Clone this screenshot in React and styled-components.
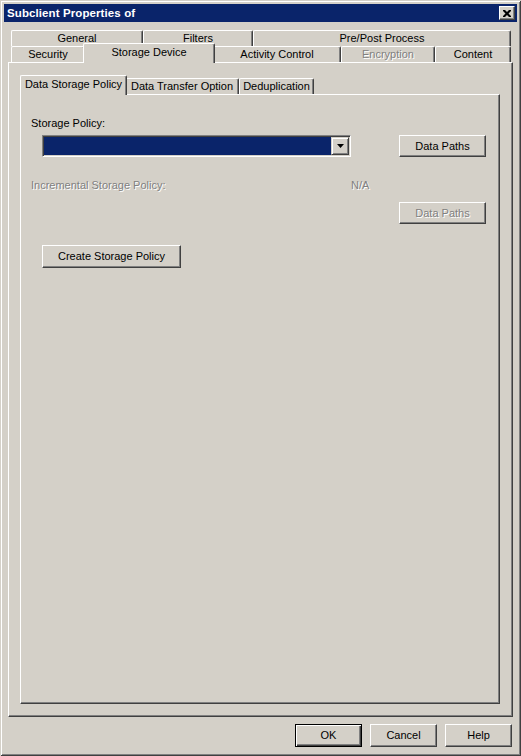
import React from "react";
import styled, { createGlobalStyle, css } from "styled-components";

const GlobalStyle = createGlobalStyle`
  html, body { margin: 0; padding: 0; background: #d4d0c8; }
  body {
    font-family: "Liberation Sans", Arial, sans-serif;
    font-size: 11px;
    color: #000;
  }
`;

const Window = styled.div`
  box-sizing: border-box;
  width: 521px;
  height: 756px;
  padding: 4px;
  background: #d4d0c8;
  display: flex;
  flex-direction: column;
  box-shadow: inset 1px 1px #d4d0c8, inset -1px -1px #404040,
    inset 2px 2px #fff, inset -2px -2px #808080;
`;

const TitleBar = styled.div`
  flex: none;
  height: 18px;
  background: #0a246a;
  display: flex;
  align-items: center;
  padding: 0 2px 0 3px;
  color: #fff;
  font-weight: bold;
  font-size: 11.5px;
  letter-spacing: 0.1px;
`;

const TitleText = styled.span`
  flex: 1;
  white-space: nowrap;
`;

const CloseButton = styled.div`
  box-sizing: border-box;
  width: 16px;
  height: 14px;
  background: #d4d0c8;
  border: 1px solid;
  border-color: #fff #404040 #404040 #fff;
  box-shadow: inset -1px -1px #808080;
  display: flex;
  align-items: center;
  justify-content: center;
`;

const TabArea = styled.div`
  flex: 1;
  display: flex;
  flex-direction: column;
  margin: 8px 4px 0;
  min-height: 0;
`;

const TabRow = styled.div`
  flex: none;
  display: flex;
  align-items: flex-start;
  height: 16px;
  padding: 0 ${(p) => p.$right || 0}px 0 ${(p) => p.$left || 0}px;
`;

const Tab = styled.div`
  box-sizing: border-box;
  flex: none;
  width: ${(p) => p.$w}px;
  height: 16px;
  border-top: 1px solid #fff;
  border-left: 1px solid #fff;
  border-right: 1px solid #404040;
  border-radius: 2px 2px 0 0;
  box-shadow: inset -1px 0 #808080;
  background: #d4d0c8;
  text-align: center;
  line-height: 14px;
  white-space: nowrap;
  overflow: hidden;
  color: ${(p) => (p.$disabled ? "#808080" : "#000")};
  text-shadow: ${(p) => (p.$disabled ? "1px 1px 0 #fff" : "none")};
  ${(p) =>
    p.$active &&
    css`
      width: ${p.$w + 4}px;
      height: 20px;
      margin: -3px -2px -1px;
      padding-top: 1px;
      position: relative;
      z-index: 1;
    `}
`;

const Panel = styled.div`
  box-sizing: border-box;
  flex: 1;
  display: flex;
  flex-direction: column;
  min-height: 0;
  border: 1px solid;
  border-color: #fff #404040 #404040 #fff;
  box-shadow: inset -1px -1px #808080;
  padding: ${(p) => p.$pad};
`;

const Row = styled.div`
  display: flex;
  align-items: flex-start;
  margin-top: ${(p) => p.$mt || 0}px;
  padding-left: ${(p) => p.$indent || 0}px;
`;

const Label = styled.div`
  line-height: 14px;
  white-space: nowrap;
  width: ${(p) => (p.$w ? `${p.$w}px` : "auto")};
  flex: none;
  color: ${(p) => (p.$disabled ? "#808080" : "#000")};
  text-shadow: ${(p) => (p.$disabled ? "1px 1px 0 #fff" : "none")};
`;

const Combo = styled.div`
  box-sizing: border-box;
  flex: none;
  width: 309px;
  height: 22px;
  padding: 1px;
  display: flex;
  border: 1px solid;
  border-color: #808080 #fff #fff #808080;
  box-shadow: inset 1px 1px #404040, inset -1px -1px #d4d0c8;
  background: #fff;
`;

const ComboValue = styled.div`
  flex: 1;
  background: #0a246a;
`;

const DropButton = styled.div`
  box-sizing: border-box;
  flex: none;
  width: 18px;
  background: #d4d0c8;
  border: 1px solid;
  border-color: #d4d0c8 #404040 #404040 #d4d0c8;
  box-shadow: inset 1px 1px #fff, inset -1px -1px #808080;
  display: flex;
  align-items: center;
  justify-content: center;
`;

const Button = styled.button`
  box-sizing: border-box;
  flex: none;
  width: ${(p) => p.$w}px;
  height: ${(p) => p.$h || 22}px;
  margin-left: ${(p) => (p.$push ? "auto" : "0")};
  padding: 0 0 1px;
  font: 11px "Liberation Sans", Arial, sans-serif;
  background: #d4d0c8;
  color: ${(p) => (p.disabled ? "#808080" : "#000")};
  text-shadow: ${(p) => (p.disabled ? "1px 1px 0 #fff" : "none")};
  border: 1px solid;
  border-color: #fff #404040 #404040 #fff;
  box-shadow: inset -1px -1px #808080;
  ${(p) =>
    p.$default &&
    css`
      border-color: #000;
      box-shadow: inset 1px 1px #fff, inset -1px -1px #404040,
        inset -2px -2px #808080;
    `}
`;

const Footer = styled.div`
  flex: none;
  display: flex;
  justify-content: flex-end;
  gap: 8px;
  padding: 7px 5px 5px 0;
`;

const backTabs = [
  { label: "General", w: 132 },
  { label: "Filters", w: 110 },
  { label: "Pre/Post Process", w: 258 },
];

const frontTabs = [
  { label: "Security", w: 74 },
  { label: "Storage Device", w: 128, active: true },
  { label: "Activity Control", w: 128 },
  { label: "Encryption", w: 94, disabled: true },
  { label: "Content", w: 76 },
];

const subTabs = [
  { label: "Data Storage Policy", w: 103, active: true },
  { label: "Data Transfer Option", w: 114 },
  { label: "Deduplication", w: 75 },
];

export default function App() {
  return (
    <>
      <GlobalStyle />
      <Window>
        <TitleBar>
          <TitleText>Subclient Properties of</TitleText>
          <CloseButton>
            <svg width="8" height="7" viewBox="0 0 8 7">
              <path
                d="M0 0h2l2 2 2-2h2v1L5.5 3.5 8 6v1H6L4 5 2 7H0V6l2.5-2.5L0 1z"
                fill="#000"
              />
            </svg>
          </CloseButton>
        </TitleBar>
        <TabArea>
          <TabRow $left={3} $right={2}>
            {backTabs.map((t) => (
              <Tab key={t.label} $w={t.w}>
                {t.label}
              </Tab>
            ))}
          </TabRow>
          <TabRow $left={3} $right={2}>
            {frontTabs.map((t) => (
              <Tab key={t.label} $w={t.w} $active={t.active} $disabled={t.disabled}>
                {t.label}
              </Tab>
            ))}
          </TabRow>
          <Panel $pad="15px 12px 12px 11px">
            <TabRow $left={2}>
              {subTabs.map((t) => (
                <Tab key={t.label} $w={t.w} $active={t.active}>
                  {t.label}
                </Tab>
              ))}
            </TabRow>
            <Panel $pad="21px 13px 0 10px">
              <Row>
                <Label>Storage Policy:</Label>
              </Row>
              <Row $mt={5} $indent={11}>
                <Combo>
                  <ComboValue />
                  <DropButton>
                    <svg width="7" height="4" viewBox="0 0 7 4">
                      <path d="M0 0h7L3.5 4z" fill="#000" />
                    </svg>
                  </DropButton>
                </Combo>
                <Button $w={87} $push>
                  Data Paths
                </Button>
              </Row>
              <Row $mt={21}>
                <Label $w={320} $disabled>
                  Incremental Storage Policy:
                </Label>
                <Label $disabled>N/A</Label>
              </Row>
              <Row $mt={10}>
                <Button $w={87} $push disabled>
                  Data Paths
                </Button>
              </Row>
              <Row $mt={21} $indent={11}>
                <Button $w={139} $h={23}>
                  Create Storage Policy
                </Button>
              </Row>
            </Panel>
          </Panel>
        </TabArea>
        <Footer>
          <Button $w={67} $h={23} $default>
            OK
          </Button>
          <Button $w={67} $h={23}>
            Cancel
          </Button>
          <Button $w={67} $h={23}>
            Help
          </Button>
        </Footer>
      </Window>
    </>
  );
}
